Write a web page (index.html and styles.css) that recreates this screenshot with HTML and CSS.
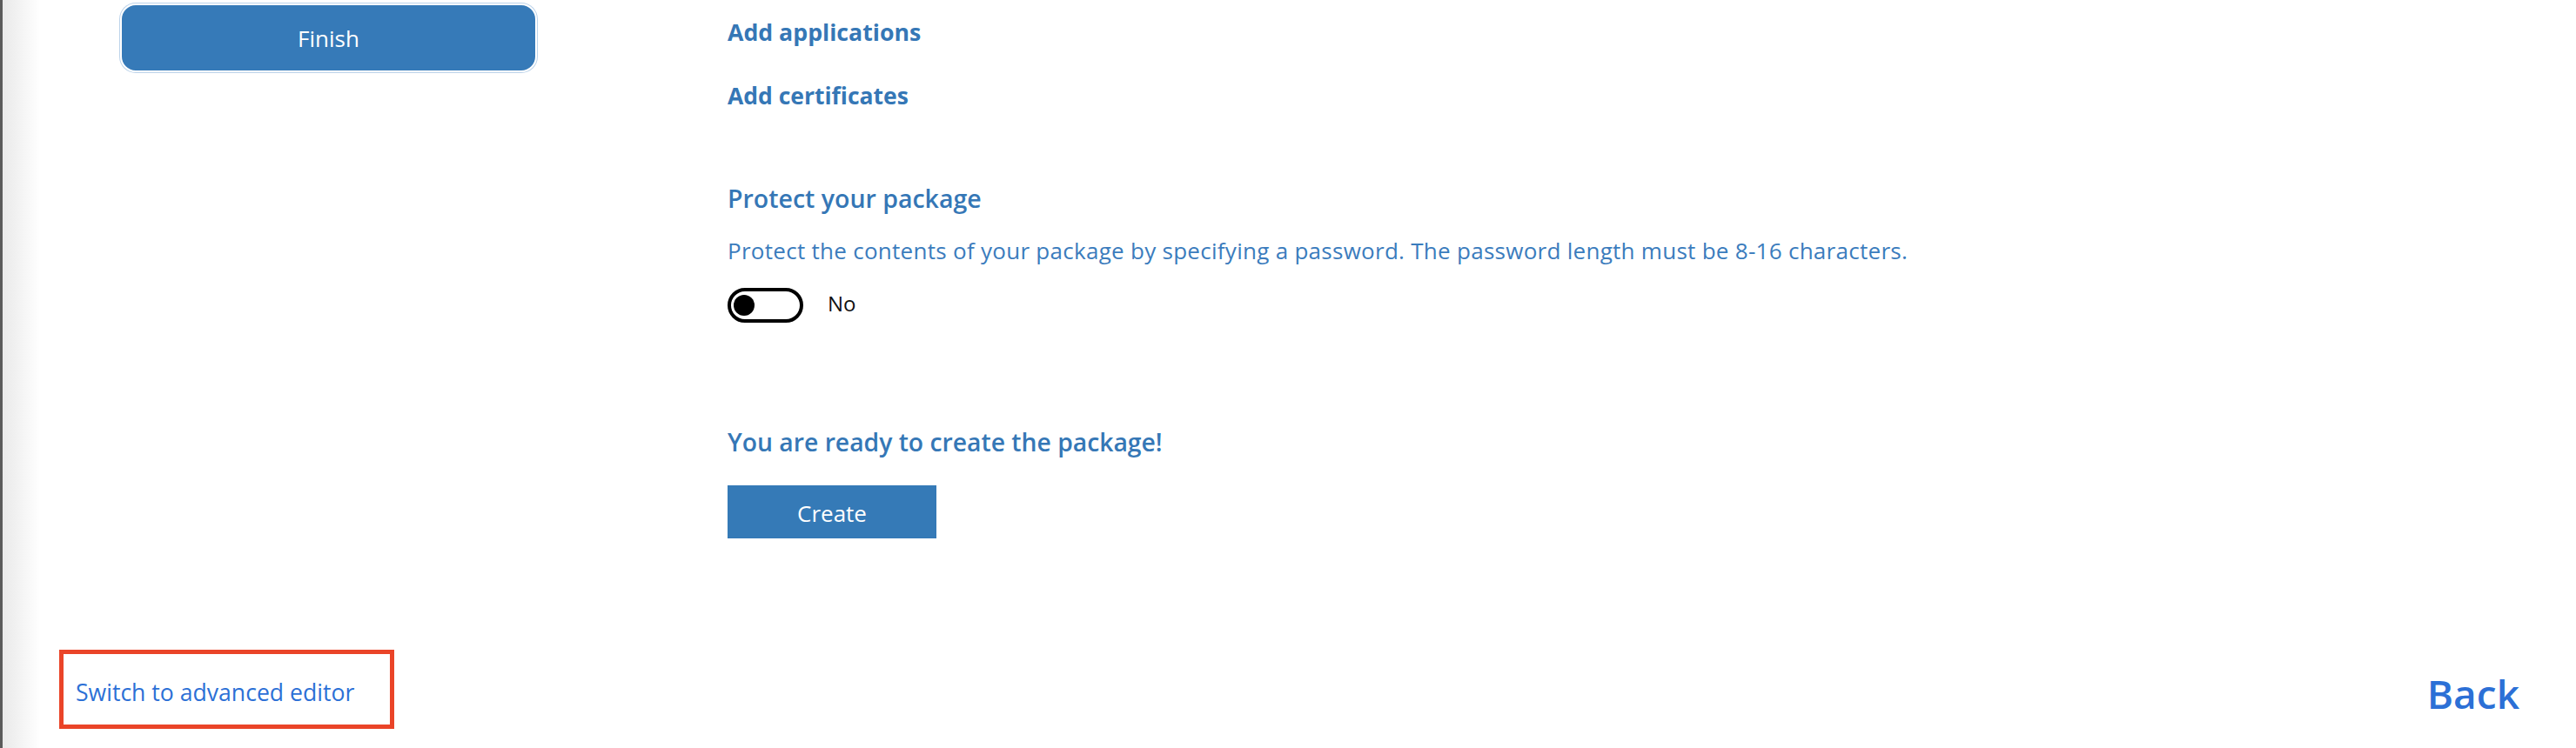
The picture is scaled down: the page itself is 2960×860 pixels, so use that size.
FILE: index.html
```html
<!DOCTYPE html>
<html>
<head>
    <title>Create package</title>
    <link rel="stylesheet" href="styles.css">
</head>
<body>
    <div class="wizard">
        <aside class="sidebar">
            <button class="finish-button">Finish</button>
        </aside>

        <main class="content">
            <a class="section-link">Add applications</a>
            <a class="section-link section-link-second">Add certificates</a>

            <h2 class="section-title">Protect your package</h2>
            <p class="section-text">Protect the contents of your package by specifying a password. The password length must be 8-16 characters.</p>
            <div class="toggle-row">
                <span class="toggle"><span class="toggle-knob"></span></span>
                <span class="toggle-label">No</span>
            </div>

            <h2 class="section-title ready-title">You are ready to create the package!</h2>
            <button class="create-button">Create</button>
        </main>
    </div>

    <footer class="footer">
        <div class="advanced-box">
            <a class="advanced-link">Switch to advanced editor</a>
        </div>
        <a class="back-link">Back</a>
    </footer>
</body>
</html>
```

FILE: styles.css
```css
body {
    font-family: "Open Sans", "Noto Sans", sans-serif;
    margin: 0;
    padding: 0;
    width: 2960px;
    height: 860px;
    overflow: hidden;
    background: linear-gradient(to right, #5a5a5a 0, #5a5a5a 3px, #e9e9e9 3px, #ffffff 46px);
    color: #3577b6;
}

.wizard {
    display: flex;
    height: 747px;
}

.sidebar {
    width: 836px;
    box-sizing: border-box;
    padding: 4px 0 0 138px;
    flex-shrink: 0;
}

.finish-button {
    display: block;
    width: 479px;
    height: 79px;
    background-color: #367ab8;
    color: #ffffff;
    font-family: inherit;
    font-size: 26px;
    border: 2px solid #ffffff;
    border-radius: 18px;
    box-shadow: 0 0 0 1px #bcd3ea;
    cursor: pointer;
}

.content {
    display: flex;
    flex-direction: column;
    align-items: flex-start;
    padding-top: 18px;
}

.section-link {
    font-size: 26.7px;
    font-weight: 700;
    line-height: 1.4;
    color: #3577b6;
    cursor: pointer;
}

.section-link-second {
    font-size: 26.5px;
    margin-top: 37px;
}

.section-title {
    font-size: 28.5px;
    font-weight: 600;
    line-height: 1.4;
    margin: 80px 0 0 0;
    color: #3577b6;
}

.section-text {
    font-size: 26px;
    letter-spacing: 0.28px;
    line-height: 1.4;
    margin: 21px 0 0 0;
    color: #3b7cbd;
}

.toggle-row {
    display: flex;
    align-items: center;
    margin-top: 24px;
}

.toggle {
    display: flex;
    align-items: center;
    width: 87px;
    height: 40px;
    box-sizing: border-box;
    border: 4px solid #000000;
    border-radius: 20px;
    padding-left: 3px;
}

.toggle-knob {
    width: 24px;
    height: 24px;
    border-radius: 50%;
    background-color: #000000;
}

.toggle-label {
    font-size: 24px;
    color: #111111;
    margin: 0 0 5px 28px;
}

.ready-title {
    font-size: 28.3px;
    margin-top: 118px;
}

.create-button {
    margin-top: 30px;
    width: 240px;
    height: 61px;
    padding-top: 3px;
    background-color: #357ab7;
    color: #ffffff;
    font-family: inherit;
    font-size: 26px;
    border: none;
    cursor: pointer;
}

.footer {
    display: flex;
    justify-content: space-between;
    align-items: flex-start;
    padding: 0 65px 0 68px;
}

.advanced-box {
    width: 385px;
    height: 91px;
    box-sizing: border-box;
    border: 5px solid #ea4428;
    padding: 26px 0 0 14px;
}

.advanced-link {
    font-size: 26.6px;
    line-height: 1.4;
    color: #2c70d6;
    cursor: pointer;
}

.back-link {
    font-size: 46px;
    font-weight: 600;
    line-height: 1.4;
    color: #2c70d6;
    margin-top: 18px;
    cursor: pointer;
}
```
